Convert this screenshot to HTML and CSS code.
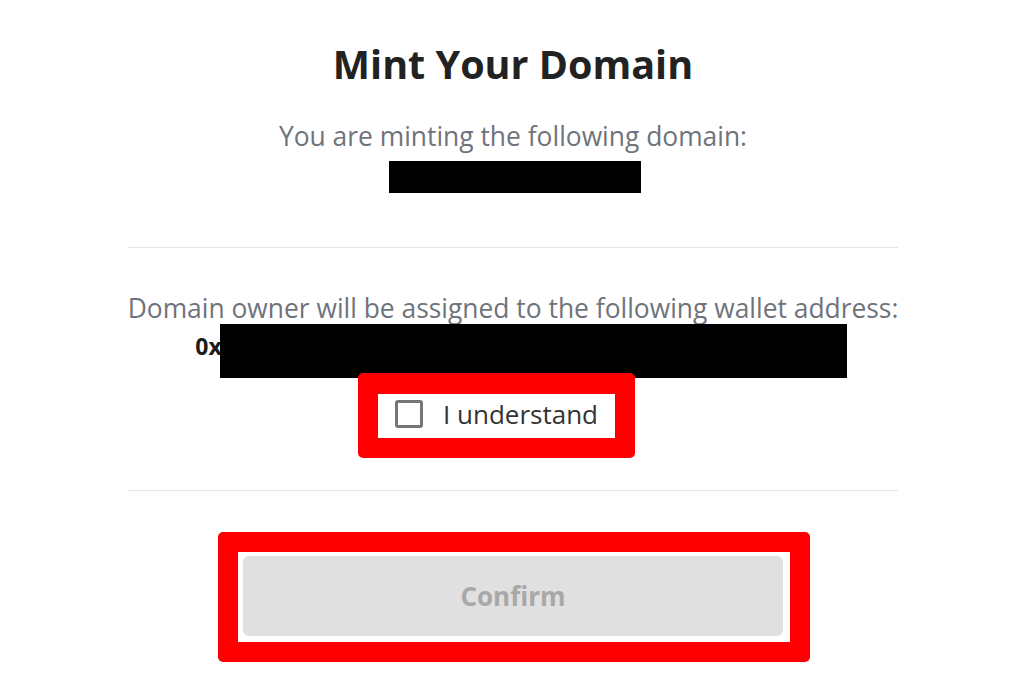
FILE: index.html
```html
<!DOCTYPE html>
<html lang="en">
<head>
<meta charset="utf-8">
<title>Mint Your Domain</title>
<link rel="stylesheet" href="styles.css">
</head>
<body>
<main class="panel">
  <h1 class="title">Mint Your Domain</h1>
  <p class="lead">You are minting the following domain:</p>
  <div class="redact redact-domain"></div>
  <hr class="divider divider-top">
  <p class="lead lead-wallet">Domain owner will be assigned to the following wallet address:</p>
  <div class="address-row">
    <span class="address-prefix">0x</span>
    <span class="redact redact-address"></span>
  </div>
  <div class="check-row">
    <div class="highlight highlight-check">
      <label class="check">
        <span class="check-box"></span>
        <span class="check-label">I understand</span>
      </label>
    </div>
  </div>
  <hr class="divider divider-bottom">
  <div class="highlight highlight-button">
    <button class="confirm" type="button" disabled>Confirm</button>
  </div>
</main>
</body>
</html>
```

FILE: styles.css
```css
html, body {
  margin: 0;
  padding: 0;
  background: #ffffff;
}

body {
  font-family: "Open Sans", "Noto Sans", sans-serif;
  color: #222222;
}

.panel {
  width: 770px;
  margin: 0 auto;
  padding-top: 40px;
  display: flex;
  flex-direction: column;
  align-items: center;
  position: relative;
  left: 1px;
}

.title {
  margin: 0;
  font-size: 39.5px;
  line-height: 48px;
  font-weight: 700;
  color: #222222;
}

.lead {
  margin: 32px 0 0;
  font-size: 26.4px;
  line-height: 32px;
  color: #6f737b;
  text-align: center;
}

.redact {
  display: block;
  background: #000000;
}

.redact-domain {
  width: 252px;
  height: 32px;
  margin-top: 9px;
  margin-left: 4px;
}

.divider {
  align-self: stretch;
  border: 0;
  border-top: 1px solid #e6e6e6;
  margin: 0;
}

.divider-top {
  margin-top: 54px;
}

.lead-wallet {
  margin-top: 44px;
  white-space: nowrap;
}

.address-row {
  display: flex;
  align-items: flex-start;
  padding-left: 16px;
  height: 54px;
}

.address-prefix {
  font-size: 23px;
  line-height: 32px;
  font-weight: 700;
  color: #1c1c1c;
  margin-top: 6px;
}

.redact-address {
  width: 627px;
  height: 54px;
  margin-left: -2px;
}

.check-row {
  display: flex;
  justify-content: center;
  align-self: stretch;
  margin-top: -5px;
  padding-right: 33px;
  position: relative;
  z-index: 1;
}

.highlight {
  border: 20px solid #ff0000;
  border-radius: 5px;
  background: #ffffff;
}

.highlight-check {
  border-top-width: 21px;
}

.check {
  display: flex;
  align-items: flex-start;
  gap: 20px;
  width: 237px;
  height: 44px;
  box-sizing: border-box;
  padding: 6px 0 0 17px;
}

.check-box {
  width: 28px;
  height: 28px;
  box-sizing: border-box;
  border: 3px solid #767676;
  border-radius: 3px;
  flex: none;
}

.check-label {
  font-size: 26px;
  line-height: 30px;
  color: #333333;
  margin-top: -1px;
}

.divider-bottom {
  margin-top: 32px;
}

.highlight-button {
  margin-top: 41px;
  margin-left: 2px;
  width: 540px;
  height: 80px;
  padding: 4px 7px 6px 5px;
  box-sizing: content-box;
}

.confirm {
  display: block;
  width: 540px;
  height: 80px;
  border: 0;
  border-radius: 6px;
  background: #e0e0e0;
  color: #a8a8a8;
  font-family: "Open Sans", "Noto Sans", sans-serif;
  font-size: 26px;
  font-weight: 700;
  cursor: default;
}
```
